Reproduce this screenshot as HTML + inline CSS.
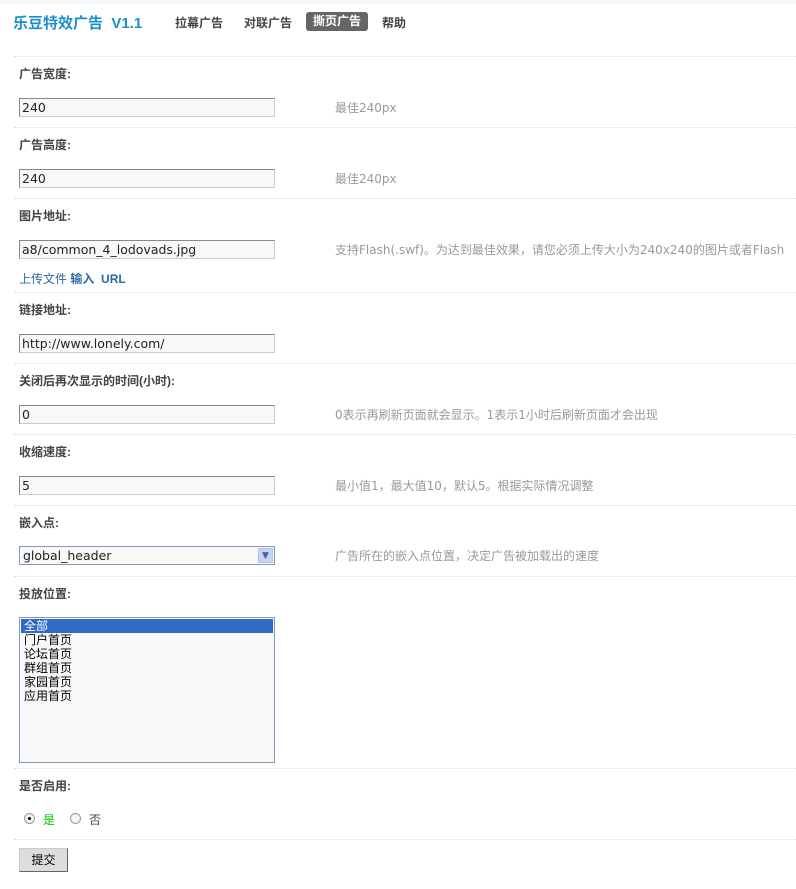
<!DOCTYPE html>
<html><head><meta charset="utf-8"><style>
body{margin:0;width:796px;height:889px;background:#fff;font-family:"Liberation Sans","Noto Sans CJK SC",sans-serif;font-size:12px;color:#333;position:relative;overflow:hidden}
.a{position:absolute;white-space:nowrap}
.top{position:absolute;left:0;top:0;width:796px;height:4px;background:#f4f7fb}
.sep{position:absolute;left:14px;width:782px;border-top:1px dotted #c6e2f2}
.lbl{font-weight:bold;color:#444;top:0}
.inp{position:absolute;left:19px;width:252px;height:17px;border:1px solid #888;border-right-color:#ccc;border-bottom-color:#ccc;background:#f8f8f8;font-family:"DejaVu Sans","Noto Sans CJK SC",sans-serif;font-size:12.5px;line-height:17px;padding-left:2px;box-sizing:content-box;color:#222}
.hint{color:#999;font-family:"DejaVu Sans","Noto Sans CJK SC",sans-serif;font-size:12px}
.nav{font-weight:bold;color:#444;font-size:12px}
</style></head><body>
<div class="top"></div>
<div class="a" style="left:13px;top:12px;font-size:15px;font-weight:bold;color:#1a8fc9">乐豆特效广告&nbsp; V1.1</div>
<div class="a nav" style="left:175px;top:14px">拉幕广告</div>
<div class="a nav" style="left:244px;top:14px">对联广告</div>
<div class="a nav" style="left:306px;top:12px;background:#666;color:#fff;border-radius:3px;padding:1px 7px;height:17px;line-height:17px">撕页广告</div>
<div class="a nav" style="left:382px;top:14px">帮助</div>

<div class="sep" style="top:56px"></div>
<div class="a lbl" style="left:19px;top:65px">广告宽度:</div>
<div class="inp" style="top:98px">240</div>
<div class="a hint" style="left:335px;top:99px">最佳240px</div>

<div class="sep" style="top:127px"></div>
<div class="a lbl" style="left:19px;top:136px">广告高度:</div>
<div class="inp" style="top:169px">240</div>
<div class="a hint" style="left:335px;top:170px">最佳240px</div>

<div class="sep" style="top:198px"></div>
<div class="a lbl" style="left:19px;top:207px">图片地址:</div>
<div class="inp" style="top:240px">a8/common_4_lodovads.jpg</div>
<div class="a hint" style="left:335px;top:241px">支持Flash(.swf)。为达到最佳效果，请您必须上传大小为240x240的图片或者Flash</div>
<div class="a" style="left:19px;top:270px;color:#2a6aa8">上传文件 <b>输入</b>&nbsp; <b>URL</b></div>

<div class="sep" style="top:292px"></div>
<div class="a lbl" style="left:19px;top:301px">链接地址:</div>
<div class="inp" style="top:334px">http://www.lonely.com/</div>

<div class="sep" style="top:363px"></div>
<div class="a lbl" style="left:19px;top:372px">关闭后再次显示的时间(小时):</div>
<div class="inp" style="top:405px">0</div>
<div class="a hint" style="left:335px;top:406px">0表示再刷新页面就会显示。1表示1小时后刷新页面才会出现</div>

<div class="sep" style="top:434px"></div>
<div class="a lbl" style="left:19px;top:443px">收缩速度:</div>
<div class="inp" style="top:476px">5</div>
<div class="a hint" style="left:335px;top:477px">最小值1，最大值10，默认5。根据实际情况调整</div>

<div class="sep" style="top:505px"></div>
<div class="a lbl" style="left:19px;top:514px">嵌入点:</div>
<div class="inp" style="top:546px;border:1px solid #7f9db9;width:251px;padding-left:3px">global_header
<div style="position:absolute;right:1px;top:1px;width:15px;height:15px;background:#c5d5f5;border:1px solid #b0c4e8;box-sizing:border-box;color:#4d6185;font-size:9px;line-height:14px;text-align:center">▼</div></div>
<div class="a hint" style="left:335px;top:547px">广告所在的嵌入点位置，决定广告被加载出的速度</div>

<div class="sep" style="top:576px"></div>
<div class="a lbl" style="left:19px;top:585px">投放位置:</div>
<div class="a" style="left:19px;top:617px;width:254px;height:144px;border:1px solid #7f9db9;background:#f8f8f8;font-size:12px;line-height:14px;color:#000">
<div style="margin:1px 1px 0;background:#316ac5;color:#fff;padding-left:3px">全部</div>
<div style="padding-left:4px">门户首页</div><div style="padding-left:4px">论坛首页</div><div style="padding-left:4px">群组首页</div><div style="padding-left:4px">家园首页</div><div style="padding-left:4px">应用首页</div></div>

<div class="sep" style="top:768px"></div>
<div class="a lbl" style="left:19px;top:777px">是否启用:</div>
<div class="a" style="left:24px;top:813px;width:9px;height:9px;border:1px solid #999;border-radius:50%;background:#f4f4f0"><div style="width:3px;height:3px;background:#000;border-radius:50%;margin:3px"></div></div>
<div class="a" style="left:43px;top:811px;color:#0c0">是</div>
<div class="a" style="left:70px;top:813px;width:9px;height:9px;border:1px solid #999;border-radius:50%;background:#f4f4f0"></div>
<div class="a" style="left:89px;top:811px;color:#444">否</div>

<div class="sep" style="top:839px"></div>
<div class="a" style="left:19px;top:848px;width:47px;height:22px;background:#ddd;border:1px solid #ccc;border-right-color:#666;border-bottom-color:#666;text-align:center;line-height:22px;color:#000">提交</div>
</body></html>
